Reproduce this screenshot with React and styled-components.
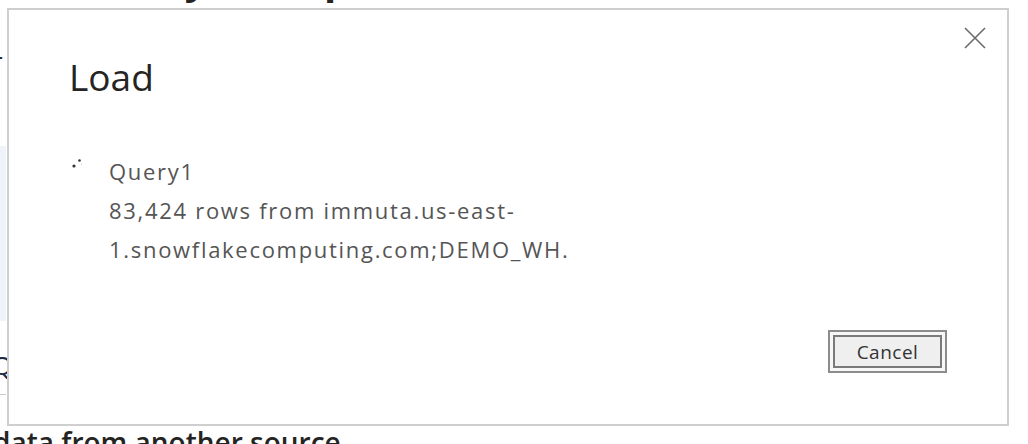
import styled, { createGlobalStyle } from "styled-components";

const GlobalStyle = createGlobalStyle`
  html, body {
    margin: 0;
    padding: 0;
    background: #ffffff;
  }
  body {
    font-family: "Open Sans", "Noto Sans", sans-serif;
    overflow: hidden;
  }
`;

export default function App() {
  return (
    <>
      <GlobalStyle />
      <Page>
        <BackHeading>Monthly snapshot</BackHeading>
        <BackSide>
          <SideLetter $top={43}>r</SideLetter>
          <SidePanel />
          <SideLetter $top={29}>Q</SideLetter>
          <SideRule />
        </BackSide>
        <BackFooter>data from another source</BackFooter>

        <Dialog role="dialog" aria-label="Load">
          <Header>
            <Title>Load</Title>
            <CloseButton aria-label="Close">
              <svg width="22" height="22" viewBox="0 0 22 22">
                <path d="M1 1 L21 21 M21 1 L1 21" stroke="#6b6b6b" strokeWidth="1.6" fill="none" />
              </svg>
            </CloseButton>
          </Header>

          <Item>
            <Spinner>
              <svg width="14" height="14" viewBox="0 0 14 14">
                <circle cx="3" cy="9" r="1.6" fill="#333" />
                <circle cx="8.5" cy="3.5" r="1.3" fill="#333" />
                <circle cx="10.5" cy="7" r="0.6" fill="#bbb" />
              </svg>
            </Spinner>
            <ItemText>
              <ItemLine>Query1</ItemLine>
              <ItemLine>83,424 rows from immuta.us-east-</ItemLine>
              <ItemLine>1.snowflakecomputing.com;DEMO_WH.</ItemLine>
            </ItemText>
          </Item>

          <Footer>
            <CancelOuter>
              <CancelInner>Cancel</CancelInner>
            </CancelOuter>
          </Footer>
        </Dialog>
      </Page>
    </>
  );
}

const Page = styled.div`
  position: relative;
  width: 1028px;
  height: 444px;
  overflow: hidden;
  display: flex;
  flex-direction: column;
`;

const BackHeading = styled.h1`
  margin: -45px 0 0 40px;
  font-size: 40px;
  line-height: 48px;
  font-weight: 700;
  color: #252423;
  white-space: nowrap;
  word-spacing: 36px;
`;

const BackSide = styled.div`
  display: flex;
  flex-direction: column;
  margin-left: -8px;
  width: 14px;
`;

const SideLetter = styled.div`
  font-size: 26px;
  line-height: 30px;
  color: #1b2a44;
  margin-top: ${(p) => p.$top}px;
`;

const SidePanel = styled.div`
  margin-top: 70px;
  height: 175px;
  background: #eff4fa;
`;

const SideRule = styled.div`
  margin-top: 14px;
  height: 1px;
  background: #cccccc;
`;

const BackFooter = styled.div`
  margin: 29px 0 0 -7px;
  font-size: 28px;
  line-height: 36px;
  font-weight: 600;
  color: #252423;
  white-space: nowrap;
`;

const Dialog = styled.div`
  position: absolute;
  left: 7px;
  top: 8px;
  width: 1002px;
  height: 418px;
  box-sizing: border-box;
  background: #ffffff;
  border: 2px solid #cfcfcf;
  display: flex;
  flex-direction: column;
`;

const Header = styled.div`
  display: flex;
  justify-content: space-between;
  align-items: flex-start;
  padding: 0 20px 0 60px;
`;

const Title = styled.h2`
  margin: 42px 0 0 0;
  font-size: 37px;
  line-height: 50px;
  font-weight: 500;
  color: #252423;
`;

const CloseButton = styled.button`
  margin-top: 16px;
  padding: 0;
  border: none;
  background: transparent;
  width: 24px;
  height: 24px;
  display: flex;
  align-items: center;
  justify-content: center;
`;

const Item = styled.div`
  display: flex;
  margin-top: 50px;
  padding-left: 62px;
`;

const Spinner = styled.div`
  width: 38px;
  padding-top: 2px;
`;

const ItemText = styled.div`
  display: flex;
  flex-direction: column;
`;

const ItemLine = styled.div`
  font-size: 22px;
  line-height: 39px;
  letter-spacing: 1.7px;
  color: #555555;
`;

const Footer = styled.div`
  display: flex;
  justify-content: flex-end;
  margin-top: auto;
  padding: 0 60px 51px 0;
`;

const CancelOuter = styled.div`
  border: 2px solid #8c8c8c;
  padding: 3px;
  background: #f7f7f7;
`;

const CancelInner = styled.button`
  width: 109px;
  height: 33px;
  border: 2px solid #7a7a7a;
  background: #efefef;
  font-family: "Open Sans", "Noto Sans", sans-serif;
  font-size: 19px;
  letter-spacing: 0.5px;
  color: #333333;
  padding: 0;
  display: flex;
  align-items: center;
  justify-content: center;
`;
